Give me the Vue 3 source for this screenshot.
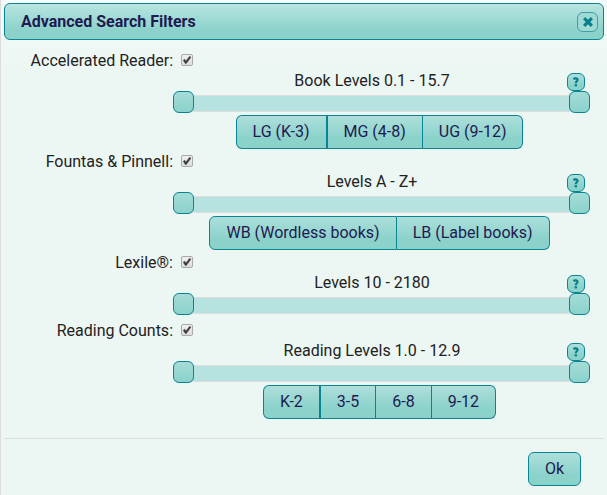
<script setup>
import { reactive } from 'vue'

const filters = reactive([
  { id: 'ar', label: 'Accelerated Reader:', on: true, caption: 'Book Levels 0.1 - 15.7', low: 0, high: 100, presets: ['LG (K-3)', 'MG (4-8)', 'UG (9-12)'] },
  { id: 'fp', label: 'Fountas & Pinnell:', on: true, caption: 'Levels A - Z+', low: 0, high: 100, presets: ['WB (Wordless books)', 'LB (Label books)'] },
  { id: 'lx', label: 'Lexile®:', on: true, caption: 'Levels 10 - 2180', low: 0, high: 100, presets: [] },
  { id: 'rc', label: 'Reading Counts:', on: true, caption: 'Reading Levels 1.0 - 12.9', low: 0, high: 100, presets: ['K-2', '3-5', '6-8', '9-12'] },
])
</script>

<template>
  <section class="dialog" role="dialog" aria-labelledby="dialog-title">
    <header class="titlebar">
      <h1 id="dialog-title">Advanced Search Filters</h1>
      <button type="button" class="close" aria-label="Close">
        <svg width="10" height="10" viewBox="0 0 10 10" aria-hidden="true">
          <path d="M2.3 2.3 7.7 7.7M7.7 2.3 2.3 7.7" stroke="#087f8c" stroke-width="3.2" stroke-linecap="square" />
        </svg>
      </button>
    </header>

    <div class="filters">
      <div v-for="f in filters" :key="f.id" class="filter" :class="{ plain: !f.presets.length }">
        <div class="toggle">
          <label :for="f.id">{{ f.label }}</label>
          <span class="check">
            <input :id="f.id" v-model="f.on" type="checkbox" />
            <svg v-if="f.on" width="12" height="12" viewBox="0 0 12 12" aria-hidden="true">
              <path d="M2.2 6.2 3.8 5.2 5 6.9 8.6 2.2 10 3.2 5.3 9.6 4.3 9.6Z" fill="#3b3b3b" stroke="#3b3b3b" stroke-width=".4" />
            </svg>
          </span>
        </div>
        <div class="range">
          <div class="caption">
            <span>{{ f.caption }}</span>
            <button type="button" class="help" aria-label="Help">
              <svg width="8" height="10" viewBox="0 0 8 10" aria-hidden="true">
                <path d="M1.4 2C2.8 1 5.6 1 5.6 2.9 5.6 4.3 3.8 4.3 3.8 6.2" fill="none" stroke="#087f8c" stroke-width="2.2" />
                <rect x="2.6" y="7.2" width="2.4" height="2.2" fill="#087f8c" />
              </svg>
            </button>
          </div>
          <div class="slider">
            <input v-model.number="f.low" type="range" min="0" max="100" :aria-label="f.label + ' minimum'" />
            <input v-model.number="f.high" type="range" min="0" max="100" :aria-label="f.label + ' maximum'" />
          </div>
          <div v-if="f.presets.length" class="presets">
            <button v-for="p in f.presets" :key="p" type="button" class="btn">{{ p }}</button>
          </div>
        </div>
      </div>
    </div>

    <footer class="actions">
      <button type="button" class="btn">Ok</button>
    </footer>
  </section>
</template>

<style>
body {
  background: #ecf6f3;
}
</style>

<style scoped>
.dialog,
.dialog * {
  box-sizing: border-box;
}
.dialog {
  min-height: 100vh;
  padding: 3px 3px 0;
  border-left: 1px solid #ddd;
  background: linear-gradient(#f5fcf9, #ecf6f3 70px);
  font: 16px/20px Roboto, "Liberation Sans", sans-serif;
  color: #222;
}
button {
  margin: 0;
  border: 1px solid #088590;
  background: linear-gradient(#addfdb, #8bd2cb 70%);
  font: inherit;
  color: #1f1a50;
}
.titlebar {
  display: flex;
  align-items: center;
  justify-content: space-between;
  height: 37px;
  padding: 0 5px 0 16px;
  border: 1px solid #088590;
  border-radius: 6px;
  background: linear-gradient(#b9e5e1, #8bd2cb 75%);
}
h1 {
  margin: 0;
  font-size: 16px;
  font-weight: 700;
  color: #1f1a50;
}
.close,
.help {
  display: grid;
  place-items: center;
  flex: none;
  padding: 0;
  border-radius: 6px;
}
.close {
  width: 21px;
  height: 20px;
  border-color: #3d9fa6;
  background: #a0dad5;
}
.filters {
  padding: 11px 14px 0 0;
}
.filter {
  padding-bottom: 3px;
}
.filter.plain {
  padding-bottom: 4px;
}
.toggle {
  display: flex;
  align-items: center;
  gap: 8px;
  height: 20px;
}
.toggle label {
  width: 169px;
  text-align: right;
}
.check {
  position: relative;
  display: flex;
  margin-bottom: 2px;
}
.check input {
  appearance: none;
  width: 12px;
  height: 12px;
  margin: 0;
  border: 1px solid #aaa;
  border-radius: 2px;
  background: linear-gradient(#f0f0f0, #ddd);
}
.check svg {
  position: absolute;
  inset: 0;
  pointer-events: none;
}
.range {
  margin-left: 169px;
}
.caption {
  display: flex;
  align-items: center;
  height: 20px;
  padding: 0 5px 0 4px;
}
.caption span {
  flex: 1;
  text-align: center;
}
.help {
  width: 18px;
  height: 18px;
  margin-top: 2px;
}
.slider {
  position: relative;
  height: 24px;
  padding: 4px 10px 0;
}
.slider::before {
  content: "";
  display: block;
  height: 15px;
  border: solid #ddd;
  border-width: 1px 0;
  background: #b6e3df;
}
.slider input {
  appearance: none;
  position: absolute;
  top: 0;
  left: 0;
  width: 100%;
  height: 22px;
  margin: 0;
  background: none;
  pointer-events: none;
}
.slider input::-webkit-slider-thumb {
  appearance: none;
  box-sizing: border-box;
  width: 21px;
  height: 22px;
  border: 1px solid #088590;
  border-radius: 6px;
  background: linear-gradient(#a5dcd7, #8bd2cb);
  pointer-events: auto;
}
.presets {
  display: flex;
  justify-content: center;
  padding-right: 4px;
}
.btn {
  height: 34px;
  padding: 0 16px;
  border-radius: 6px;
}
.presets .btn {
  border-left-width: 0;
  border-radius: 0;
}
.presets .btn:first-child {
  border-left-width: 1px;
  border-radius: 6px 0 0 6px;
}
.presets .btn:first-child:not(:nth-last-child(2)) {
  border-right-width: 2px;
}
.presets .btn:last-child {
  border-radius: 0 6px 6px 0;
}
.actions {
  display: flex;
  justify-content: flex-end;
  margin-top: 16px;
  padding: 13px 23px 0 0;
  border-top: 1px solid #dadfdd;
}
</style>
